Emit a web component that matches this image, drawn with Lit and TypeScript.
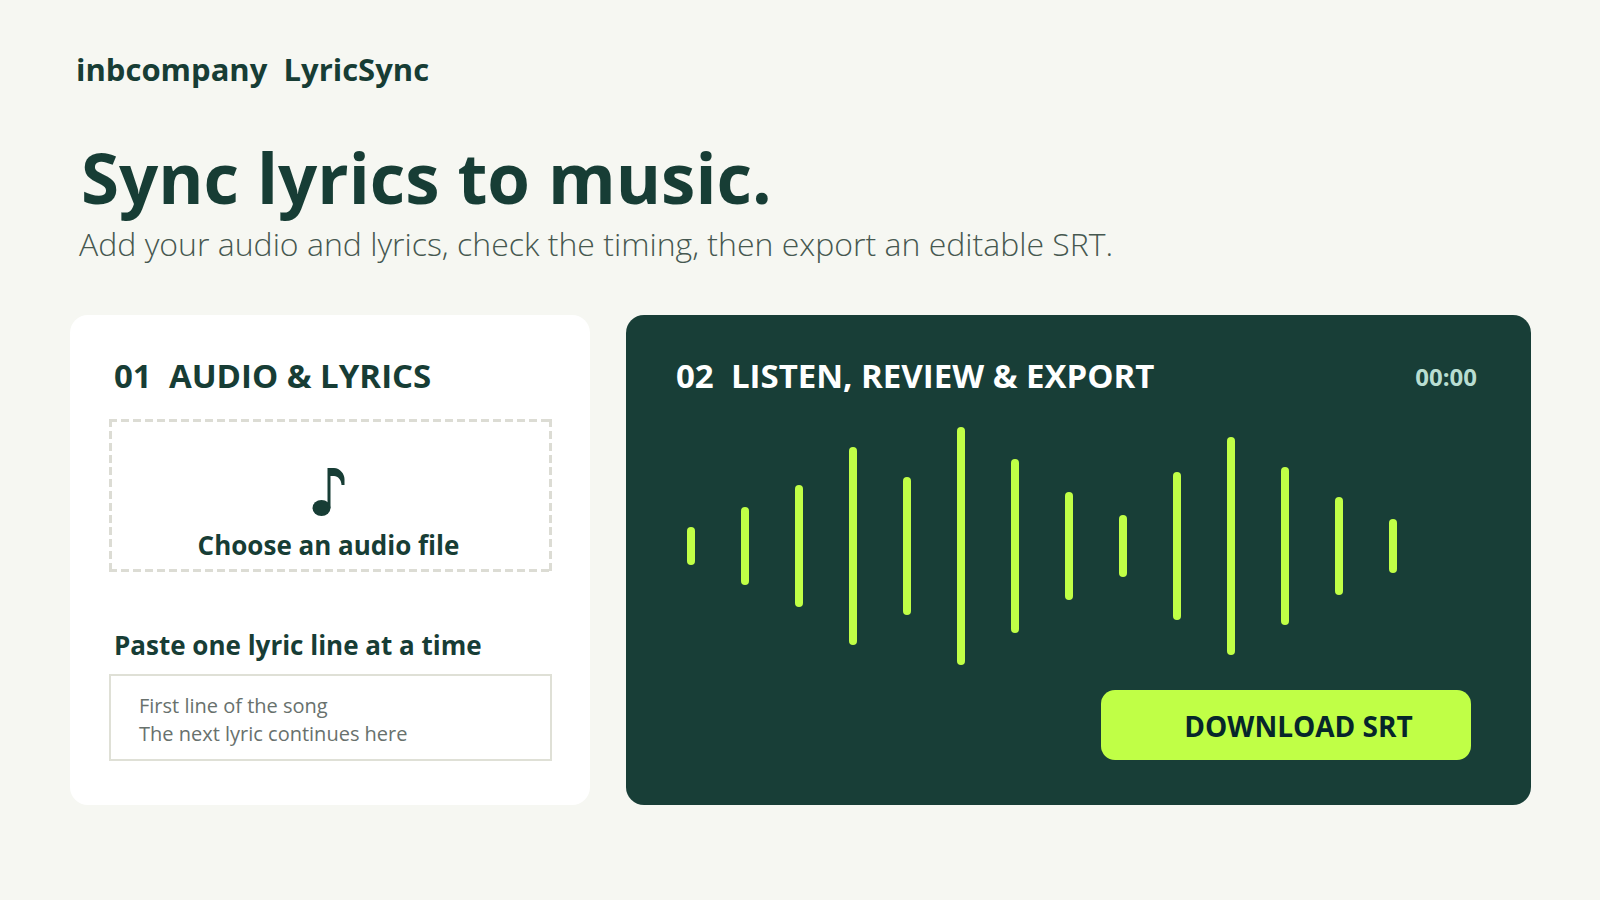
import { LitElement, html, css } from "lit";
import { customElement, property } from "lit/decorators.js";
import { styleMap } from "lit/directives/style-map.js";

@customElement("lyric-waveform")
class LyricWaveform extends LitElement {
  @property({ attribute: false }) levels: number[] = [];

  static styles = css`
    :host {
      display: flex;
      align-items: center;
      justify-content: space-between;
    }
    .bar {
      width: 8px;
      border-radius: 4px;
      background: #c0ff46;
    }
  `;

  render() {
    return this.levels.map(
      (level) => html`<span class="bar" style=${styleMap({ height: `${level}px` })}></span>`
    );
  }
}

@customElement("app-root")
class AppRoot extends LitElement {
  private levels = [38, 78, 122, 198, 138, 238, 174, 108, 62, 148, 218, 158, 98, 54];

  static styles = css`
    :host {
      display: block;
      box-sizing: border-box;
      min-height: 100vh;
      padding: 49px 69px 48px 70px;
      background: #f6f7f2;
      color: #173d35;
      font-family: "Open Sans", "Noto Sans", sans-serif;
    }
    *,
    *::before,
    *::after {
      box-sizing: border-box;
    }
    h1,
    h2,
    p {
      margin: 0;
    }
    .brand {
      padding-left: 6px;
      font-size: 31px;
      line-height: 40px;
      font-weight: 700;
      white-space: pre-wrap;
    }
    .title {
      margin-top: 48px;
      padding-left: 11px;
      font-size: 69px;
      line-height: 80px;
      font-weight: 700;
    }
    .lead {
      margin-top: 5px;
      padding-left: 9px;
      font-size: 32px;
      line-height: 44px;
      font-weight: 300;
      color: #465850;
    }
    .panels {
      display: grid;
      grid-template-columns: 520fr 905fr;
      gap: 36px;
      margin-top: 49px;
    }
    .panel {
      display: flex;
      flex-direction: column;
      border-radius: 18px;
    }
    .source {
      padding: 39px 38px 44px 39px;
      background: #ffffff;
    }
    .review {
      padding: 39px 60px 45px 50px;
      background: #183e37;
    }
    .heading {
      font-size: 33px;
      line-height: 44px;
      font-weight: 700;
      white-space: pre-wrap;
    }
    .source .heading,
    .field-label {
      padding-left: 5px;
    }
    .review .heading {
      color: #ffffff;
    }
    .drop {
      --dash: #dcdcd4 0 8px, transparent 8px 12px;
      display: flex;
      flex-direction: column;
      align-items: center;
      gap: 11px;
      margin-top: 21px;
      padding: 49px 4px 9px 0;
      cursor: pointer;
      background:
        repeating-linear-gradient(90deg, var(--dash)) top / 100% 3px no-repeat,
        repeating-linear-gradient(90deg, var(--dash)) bottom / 100% 3px no-repeat,
        repeating-linear-gradient(180deg, var(--dash)) left / 3px 100% no-repeat,
        repeating-linear-gradient(180deg, var(--dash)) right / 3px 100% no-repeat;
    }
    .file {
      position: absolute;
      width: 1px;
      height: 1px;
      opacity: 0;
    }
    .note {
      display: block;
      width: 34px;
      height: 48px;
      fill: currentColor;
    }
    .drop-text,
    .field-label {
      font-size: 26px;
      line-height: 36px;
      font-weight: 700;
    }
    .field-label {
      margin-top: 55px;
    }
    .lyrics {
      display: block;
      width: 100%;
      height: 87px;
      margin: 11px 0 0;
      padding: 16px 28px 11px;
      border: 2px solid #dfe0d6;
      border-radius: 0;
      outline: none;
      resize: none;
      overflow: hidden;
      background: #ffffff;
      color: #68716d;
      font-family: inherit;
      font-size: 20px;
      line-height: 28px;
      font-weight: 400;
    }
    .review-top {
      display: flex;
      align-items: flex-start;
      justify-content: space-between;
      margin-right: -6px;
    }
    .time {
      font-size: 24px;
      line-height: 46px;
      font-weight: 700;
      color: #b9ddd1;
    }
    .wave {
      margin: 27px 74px 0 11px;
    }
    .download {
      align-self: flex-end;
      width: 370px;
      max-width: 100%;
      height: 70px;
      margin-top: 25px;
      padding: 2px 0 0 25px;
      border: 0;
      border-radius: 14px;
      background: #c0ff46;
      color: #06262b;
      font-family: inherit;
      font-size: 28px;
      font-weight: 700;
      cursor: pointer;
    }
  `;

  render() {
    return html`
      <header>
        <p class="brand">inbcompany  LyricSync</p>
        <h1 class="title">Sync lyrics to music.</h1>
        <p class="lead">Add your audio and lyrics, check the timing, then export an editable SRT.</p>
      </header>
      <main class="panels">
        <section class="panel source">
          <h2 class="heading">01  AUDIO &amp; LYRICS</h2>
          <label class="drop" for="audio">
            <input class="file" id="audio" type="file" accept="audio/*" />
            <svg class="note" viewBox="0 0 34 48" aria-hidden="true">
              <ellipse cx="9.5" cy="40" rx="9" ry="8" />
              <path d="M15.500 0H22C28 0 32.500 6 32.500 11V17H29.500C29.500 12 26 8 22 8H18.500V40H15.500Z" />
            </svg>
            <span class="drop-text">Choose an audio file</span>
          </label>
          <label class="field-label" for="lyrics">Paste one lyric line at a time</label>
          <textarea
            class="lyrics"
            id="lyrics"
            spellcheck="false"
            .value=${"First line of the song\nThe next lyric continues here"}
          ></textarea>
        </section>
        <section class="panel review">
          <div class="review-top">
            <h2 class="heading">02  LISTEN, REVIEW &amp; EXPORT</h2>
            <time class="time">00:00</time>
          </div>
          <lyric-waveform class="wave" .levels=${this.levels}></lyric-waveform>
          <button class="download" type="button">DOWNLOAD SRT</button>
        </section>
      </main>
    `;
  }
}
